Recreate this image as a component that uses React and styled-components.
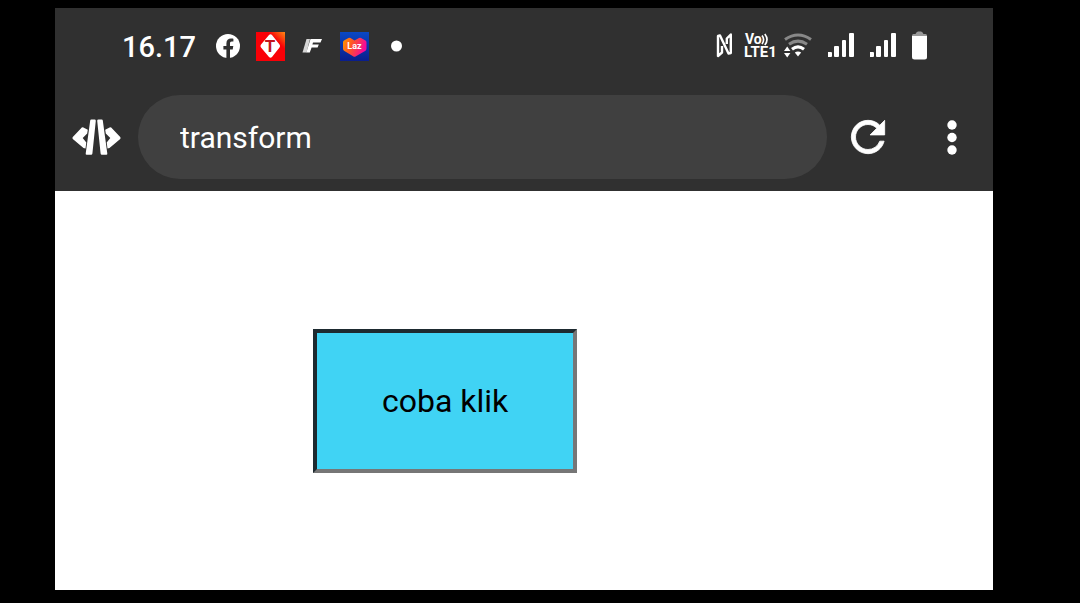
import React from "react";
import styled, { createGlobalStyle } from "styled-components";

const GlobalStyle = createGlobalStyle`
  * { box-sizing: border-box; }
  body { margin: 0; background: #000; font-family: Roboto, "Liberation Sans", sans-serif; }
`;

const Screen = styled.div`
  display: flex;
  flex-direction: column;
  min-height: 100vh;
  padding: 8px 87px 13px 55px;
  background: #000;
`;

const Header = styled.header`
  background: #303030;
  color: #fff;
`;

const StatusBar = styled.div`
  display: flex;
  align-items: center;
  justify-content: space-between;
  height: 75px;
  padding: 0 66px 0 67px;
`;

const StatusGroup = styled.div`
  display: flex;
  align-items: center;
  gap: ${(p) => p.$gap}px;
`;

const Clock = styled.time`
  margin-right: 6px;
  padding-top: 2px;
  font-size: 29px;
  line-height: 32px;
  font-weight: 500;
`;

const Icon = styled.svg`
  display: block;
  flex: none;
  width: ${(p) => p.$w}px;
  height: ${(p) => p.$h}px;
`;

const Toolbar = styled.div`
  display: flex;
  align-items: center;
  padding: 12px 16px;
`;

const Address = styled.input`
  flex: 1;
  min-width: 0;
  height: 84px;
  margin: 0 16px 0 17px;
  padding: 0 42px;
  border: 0;
  border-radius: 42px;
  outline: none;
  background: #404040;
  color: #fff;
  font: 400 30px Roboto, "Liberation Sans", sans-serif;
`;

const IconButton = styled.button`
  display: flex;
  align-items: center;
  justify-content: center;
  width: 50px;
  height: 50px;
  margin-left: ${(p) => p.$gap || 0}px;
  padding: 0;
  border: 0;
  background: none;
  color: #fff;
`;

const Content = styled.main`
  flex: 1;
  padding: 138px 24px 24px 258px;
  background: #fff;
`;

const TryButton = styled.button`
  display: block;
  padding: 50px 65px;
  border: 4px solid;
  border-color: #1d2a30 #767676 #767676 #1d2a30;
  border-radius: 0;
  background: #40d3f4;
  color: #000;
  font: 400 32px/36px Roboto, "Liberation Sans", sans-serif;
`;

function FacebookIcon() {
  return (
    <Icon $w={30} $h={30} viewBox="0 0 30 30" aria-hidden="true">
      <circle cx="14" cy="15" r="12" fill="#fff" />
      <path
        d="M12.4 27V18.6H9.4V15h3v-2.6c0-3.2 1.8-4.9 4.6-4.9 1.2 0 2.4.2 2.4.2v2.9h-1.500c-1.500 0-1.900.9-1.900 1.900V15h3.300l-.6 3.600H16V27z"
        fill="#303030"
      />
    </Icon>
  );
}

function OperatorIcon() {
  return (
    <Icon $w={30} $h={30} viewBox="0 0 30 30" aria-hidden="true">
      <defs>
        <linearGradient id="operator" x1="0.5" y1="0.5" x2="1" y2="0">
          <stop offset="0.4" stopColor="#f90007" />
          <stop offset="1" stopColor="#ff8a14" />
        </linearGradient>
      </defs>
      <rect x="0" y="1" width="29" height="29" fill="url(#operator)" />
      <path d="M13 4q1.500-1.500 3 0l7.500 9.500q1.200 1.500 0 3L16 26q-1.500 1.500-3 0l-8-9.500q-1.200-1.500 0-3z" fill="#fff" />
      <text x="14" y="21" fill="#c4161f" fontSize="17" fontWeight="700" textAnchor="middle" fontFamily="Roboto, sans-serif">T</text>
    </Icon>
  );
}

function GameIcon() {
  return (
    <Icon $w={30} $h={30} viewBox="0 0 30 30" aria-hidden="true" fill="#fff">
      <path d="M8.500 8H12L8.500 21.500H4.500z" opacity="0.8" />
      <path d="M12.500 8H24l-1.500 3.400H15l-.6 2h6.400L19.600 16.500h-6L11.800 21.500H8.300z" />
    </Icon>
  );
}

function ShopIcon() {
  return (
    <Icon $w={30} $h={30} viewBox="0 0 30 30" aria-hidden="true">
      <defs>
        <linearGradient id="heart" x1="0" y1="0" x2="1" y2="0.3">
          <stop offset="0" stopColor="#ff9a00" />
          <stop offset="0.4" stopColor="#ff5a1f" />
          <stop offset="1" stopColor="#f5089c" />
        </linearGradient>
        <linearGradient id="tile" x1="0" y1="0" x2="0" y2="1">
          <stop offset="0" stopColor="#0a48c4" />
          <stop offset="1" stopColor="#0a1e8c" />
        </linearGradient>
      </defs>
      <rect y="1" width="29" height="29" fill="url(#tile)" />
      <path
        d="M4 9.500L8.500 7q1-.5 2 0l4 2.500L19 7q1-.5 2 0l4.500 2.500q1 .6 1 2v6q0 1.500-1 2.200L15.500 25.500q-1 .5-2 0L4 19.700q-1-.7-1-2.200v-6q0-1.400 1-2z"
        fill="url(#heart)"
      />
      <text x="14.500" y="18" fill="#fff" fontSize="9" fontWeight="700" textAnchor="middle" fontFamily="Roboto, sans-serif">Laz</text>
    </Icon>
  );
}

function DotIcon() {
  return (
    <Icon $w={30} $h={30} viewBox="0 0 30 30" aria-hidden="true">
      <circle cx="14.500" cy="15" r="5.500" fill="#fff" />
    </Icon>
  );
}

function NfcIcon() {
  return (
    <Icon $w={18} $h={30} viewBox="0 0 18 30" fill="none" stroke="#fff" strokeWidth="2.400" strokeLinejoin="round" aria-hidden="true">
      <path d="M6 15V21.500L2 25V5L4 4.500 12.500 22.500 14.800 22V3.500L10.800 7.500V13" />
    </Icon>
  );
}

function VolteIcon() {
  return (
    <Icon $w={30} $h={30} viewBox="0 0 30 30" fill="#fff" aria-hidden="true" overflow="visible">
      <text fontWeight="700" fontFamily="Roboto, sans-serif">
        <tspan x="1" y="13" fontSize="14">Vo</tspan>
        <tspan x="0" y="26" fontSize="15">LTE1</tspan>
      </text>
      <path d="M18 4.500q3.200 4 0 8.500M20.800 3q4.400 5.500 0 11" fill="none" stroke="#fff" strokeWidth="1.700" />
    </Icon>
  );
}

function WifiIcon() {
  return (
    <Icon $w={34} $h={30} viewBox="0 0 34 30" fill="none" aria-hidden="true">
      <path d="M1 8.500q13-9 26 0M5 13.300q9-6.300 18 0" stroke="#888" strokeWidth="3" />
      <path d="M8 18.200q6-4.500 12 0" stroke="#fff" strokeWidth="3.200" />
      <path d="M10.800 21.500q3.200-2.200 6.400 0L14 25.500z" fill="#fff" />
      <path d="M0 20l3.200-4.500L6.400 20zM0 22l3.200 4.500L6.400 22z" fill="#fff" />
    </Icon>
  );
}

function SignalIcon() {
  return (
    <Icon $w={32} $h={30} viewBox="0 0 32 30" fill="#fff" aria-hidden="true">
      <rect x="-1" y="21" width="5" height="5" rx="1" />
      <rect x="6" y="15" width="5" height="11" rx="1" />
      <rect x="14" y="9" width="4" height="17" rx="1" />
      <rect x="21" y="2" width="5" height="24" rx="1" />
    </Icon>
  );
}

function BatteryIcon() {
  return (
    <Icon $w={15} $h={30} viewBox="0 0 15 30" aria-hidden="true">
      <path d="M0 6V4.500Q0 3 1.500 3H3.500Q4.500.5 6 .5h3q1.500 0 2.500 2.500h2Q15 3 15 4.500V6z" fill="#999" />
      <path d="M0 5h15V26q0 2.500-2.500 2.500h-10Q0 28.500 0 26z" fill="#fff" />
    </Icon>
  );
}

function CodeLogo() {
  return (
    <Icon $w={49} $h={36} viewBox="0 0 49 36" fill="#fff" aria-hidden="true">
      <path d="M9.800 8.600q.8-.6 1.600-.2L15.800 10.800 15.200 14.500 10.700 19 14.300 23.500 13.500 29.600 11.500 29 .8 20q-.8-1 0-2z" />
      <path d="M39.200 8.600q-.8-.6-1.600-.2L33.200 10.800 33.800 14.500 38.300 19 34.700 23.500 35.500 29.600 37.500 29 48.200 20q.8-1 0-2z" />
      <path d="M18.200 1.400Q18.300.5 19.300.5h3.300q1.200 0 1.200 1.200L20.400 34.500q-.2 1.300-1.200 1.300h-4.500q-1.200 0-1-1.300z" />
      <path d="M30.800 1.400Q30.700.5 29.700.5h-3.300q-1.200 0-1.200 1.200L28.600 34.500q.2 1.300 1.200 1.300h4.500q1.200 0 1-1.300z" />
    </Icon>
  );
}

function ReloadIcon() {
  return (
    <Icon $w={50} $h={50} viewBox="0 0 24 24" fill="#fff" aria-hidden="true">
      <path d="M17.650 6.350A7.958 7.958 0 0 0 12 4c-4.420 0-7.990 3.580-7.990 8s3.570 8 7.990 8c3.730 0 6.840-2.550 7.730-6h-2.080A5.990 5.990 0 0 1 12 18c-3.310 0-6-2.690-6-6s2.690-6 6-6c1.660 0 3.140.69 4.220 1.780L13 11h7V4z" stroke="#fff" strokeWidth="0.400" />
    </Icon>
  );
}

function MoreIcon() {
  return (
    <Icon $w={50} $h={50} viewBox="0 0 50 50" fill="#fff" aria-hidden="true">
      <circle cx="25" cy="13" r="4.700" />
      <circle cx="25" cy="25.500" r="4.700" />
      <circle cx="25" cy="38" r="4.700" />
    </Icon>
  );
}

export default function App() {
  return (
    <Screen>
      <GlobalStyle />
      <Header>
        <StatusBar>
          <StatusGroup $gap={12}>
            <Clock>16.17</Clock>
            <FacebookIcon />
            <OperatorIcon />
            <GameIcon />
            <ShopIcon />
            <DotIcon />
          </StatusGroup>
          <StatusGroup $gap={10}>
            <NfcIcon />
            <VolteIcon />
            <WifiIcon />
            <SignalIcon />
            <SignalIcon />
            <BatteryIcon />
          </StatusGroup>
        </StatusBar>
        <Toolbar>
          <IconButton type="button" aria-label="Code">
            <CodeLogo />
          </IconButton>
          <Address type="text" aria-label="Address" defaultValue="transform" spellCheck={false} />
          <IconButton type="button" aria-label="Reload">
            <ReloadIcon />
          </IconButton>
          <IconButton type="button" aria-label="More options" $gap={34}>
            <MoreIcon />
          </IconButton>
        </Toolbar>
      </Header>
      <Content>
        <TryButton type="button">coba klik</TryButton>
      </Content>
    </Screen>
  );
}
